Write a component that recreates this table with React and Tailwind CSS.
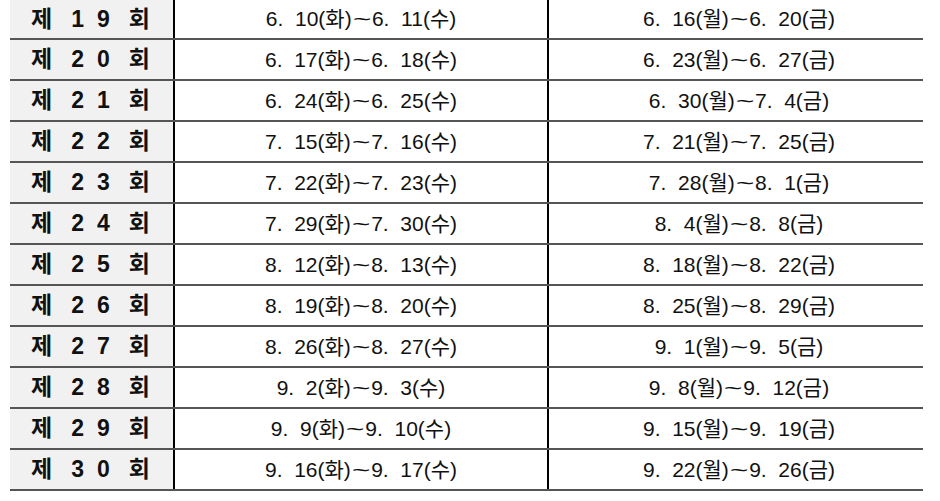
import React from "react";

// 회차별 일정표
const rows = [
  ["19", "6. 10(화)", "6. 11(수)", "6. 16(월)", "6. 20(금)"],
  ["20", "6. 17(화)", "6. 18(수)", "6. 23(월)", "6. 27(금)"],
  ["21", "6. 24(화)", "6. 25(수)", "6. 30(월)", "7. 4(금)"],
  ["22", "7. 15(화)", "7. 16(수)", "7. 21(월)", "7. 25(금)"],
  ["23", "7. 22(화)", "7. 23(수)", "7. 28(월)", "8. 1(금)"],
  ["24", "7. 29(화)", "7. 30(수)", "8. 4(월)", "8. 8(금)"],
  ["25", "8. 12(화)", "8. 13(수)", "8. 18(월)", "8. 22(금)"],
  ["26", "8. 19(화)", "8. 20(수)", "8. 25(월)", "8. 29(금)"],
  ["27", "8. 26(화)", "8. 27(수)", "9. 1(월)", "9. 5(금)"],
  ["28", "9. 2(화)", "9. 3(수)", "9. 8(월)", "9. 12(금)"],
  ["29", "9. 9(화)", "9. 10(수)", "9. 15(월)", "9. 19(금)"],
  ["30", "9. 16(화)", "9. 17(수)", "9. 22(월)", "9. 26(금)"],
];

function Range({ from, to }) {
  return (
    <span className="whitespace-pre text-[21px] text-[#111]">
      {from.replace(". ", ".  ")}
      <span className="inline-block mx-[4px] scale-x-150">~</span>
      {to.replace(". ", ".  ")}
    </span>
  );
}

function App() {
  return (
    <div className="w-[940px] h-[501px] bg-white overflow-hidden font-['Liberation_Sans','Noto_Sans_CJK_KR',sans-serif]">
      <div className="ml-[10px] w-[913px] flex flex-col">
        {rows.map(([no, a, b, c, d], i) => (
          <div
            key={no}
            className={`flex border-b-2 border-[#555] ${i === 0 ? "h-[40px]" : "h-[41px]"}`}
          >
            {/* 회차 */}
            <div className="w-[165px] bg-[#f1f1f1] border-r-2 border-black flex items-center pl-[21px] text-[23px] font-bold text-[#111]">
              <span>제</span>
              <span className="ml-[19px]">{no[0]}</span>
              <span className="ml-[13px]">{no[1]}</span>
              <span className="ml-[19px]">회</span>
            </div>
            <div className="w-[374px] border-r-2 border-black flex items-center justify-center">
              <Range from={a} to={b} />
            </div>
            <div className="flex-1 flex items-center justify-center pl-[6px]">
              <Range from={c} to={d} />
            </div>
          </div>
        ))}
      </div>
    </div>
  );
}

export default App;
